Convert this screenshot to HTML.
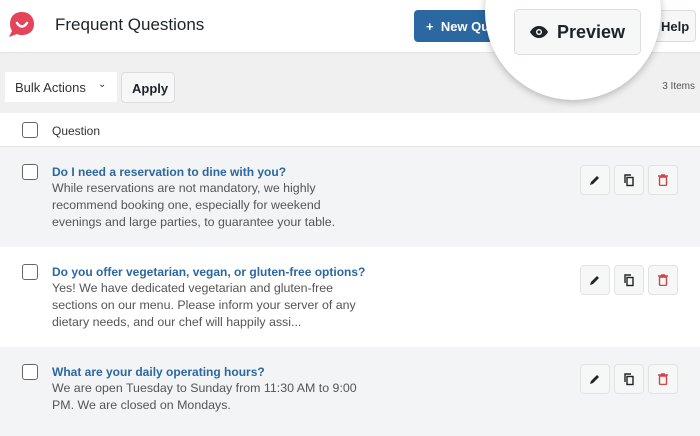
<!DOCTYPE html>
<html><head><style>
*{box-sizing:border-box;margin:0;padding:0}
body{width:700px;height:436px;overflow:hidden;background:#f0f0f1;font-family:"Liberation Sans",sans-serif;position:relative}
.hdr{position:absolute;left:0;top:0;width:700px;height:53px;background:#fff;border-bottom:1px solid #e2e2e2}
.title{position:absolute;left:55px;top:15px;font-size:17px;color:#1d2327}
.newq{position:absolute;left:414px;top:10px;width:90px;height:32px;background:#2b67a0;border-radius:4px;color:#fff;font-size:13px;padding:9px 0 0 12px;font-weight:bold}
.help{position:absolute;left:652px;top:10px;width:44px;height:32px;background:#f6f7f7;border:1px solid #ddd;border-radius:4px;font-size:13px;padding:8px 0 0 8px;color:#1d2327;font-weight:bold}
.mag{position:absolute;left:485px;top:-76px;width:176px;height:176px;border-radius:50%;background:#fff;box-shadow:0 2px 8px rgba(0,0,0,.25);overflow:hidden}
.pv{position:absolute;left:29px;top:85px;width:127px;height:46px;background:#f6f7f7;border:1px solid #ddd;border-radius:5px;font-size:18px;font-weight:bold;color:#1d2327;padding:12px 0 0 42px}
.bulk{position:absolute;left:5px;top:72px;width:112px;height:30px;background:#fff;font-size:13px;color:#333;padding:8px 0 0 10px}
.apply{position:absolute;left:121px;top:72px;width:54px;height:31px;background:#f6f7f7;border:1px solid #ddd;border-radius:4px;font-size:13px;font-weight:bold;padding:8px 0 0 10px;color:#1d2327}
.items{position:absolute;right:5px;top:81px;font-size:10px;color:#555}
.th{position:absolute;left:0;top:113px;width:700px;height:34px;background:#fff;border-bottom:1px solid #e5e5e5}
.cb{position:absolute;left:22px;width:16px;height:16px;border:1.5px solid #666;border-radius:3px;background:#fff}
.row{position:absolute;left:0;width:700px}
.q{position:absolute;left:52px;font-size:12px;font-weight:bold;color:#2b67a0}
.a{position:absolute;left:52px;width:310px;font-size:12.4px;line-height:17px;color:#555}
.b{position:absolute;width:30px;height:30px;background:#f6f7f7;border:1px solid #e2e2e2;border-radius:4px;display:flex;align-items:center;justify-content:center}
</style></head><body>
<div class="hdr">
<svg style="position:absolute;left:6px;top:11px" width="32" height="28" viewBox="0 0 32 28"><path d="M16 1C8 1 4 6 4 13c0 3 1 5 2 7L3 26l8-3c2 1 3 1 5 1 8 0 12-5 12-11S24 1 16 1z" fill="#e5435a"/><path d="M11 12q5 7 10 0" stroke="#fff" stroke-width="2.5" fill="none" stroke-linecap="round"/></svg>
<div class="title">Frequent Questions</div>
<div class="newq">+&nbsp; New Qu</div>
<div class="help">Help</div>
</div>
<div class="mag"><div class="pv"><svg style="position:absolute;left:14px;top:15px" width="20" height="14" viewBox="0 0 20 14"><path d="M10 1C5 1 2 5 1 7c1 2 4 6 9 6s8-4 9-6c-1-2-4-6-9-6z" fill="#1d2327"/><circle cx="10" cy="7" r="3" fill="#fff"/><circle cx="10" cy="7" r="1.6" fill="#1d2327"/></svg>Preview</div></div>
<div class="bulk">Bulk Actions <span style="position:absolute;left:93px;top:7px;font-size:10px">⌄</span></div>
<div class="apply">Apply</div>
<div class="items">3 Items</div>
<div class="th"><div class="cb" style="top:9px"></div><div style="position:absolute;left:52px;top:11px;font-size:12px;color:#333">Question</div></div>

<div class="row" style="top:147px;height:100px;background:#f3f4f6">
<div class="cb" style="top:17px"></div>
<div class="q" style="top:18px">Do I need a reservation to dine with you?</div>
<div class="a" style="top:33px">While reservations are not mandatory, we highly recommend booking one, especially for weekend evenings and large parties, to guarantee your table.</div>
</div>
<div class="row" style="top:247px;height:100px;background:#fff">
<div class="cb" style="top:17px"></div>
<div class="q" style="top:18px">Do you offer vegetarian, vegan, or gluten-free options?</div>
<div class="a" style="top:33px">Yes! We have dedicated vegetarian and gluten-free sections on our menu. Please inform your server of any dietary needs, and our chef will happily assi...</div>
</div>
<div class="row" style="top:347px;height:89px;background:#f3f4f6">
<div class="cb" style="top:17px"></div>
<div class="q" style="top:18px">What are your daily operating hours?</div>
<div class="a" style="top:33px">We are open Tuesday to Sunday from 11:30 AM to 9:00 PM. We are closed on Mondays.</div>
</div>

<div id="btns"></div>
<script>
[165,265,364].forEach(function(t){
var h='';
h+='<div class="b" style="left:580px;top:'+t+'px"><svg width="12" height="12" viewBox="0 0 12 12"><path d="M1 11l1-3 6-6 2 2-6 6z" fill="#1d2327"/></svg></div>';
h+='<div class="b" style="left:614px;top:'+t+'px"><svg width="12" height="13" viewBox="0 0 12 13"><path d="M2 9V1h6" stroke="#1d2327" stroke-width="1.4" fill="none"/><rect x="4" y="3.5" width="6" height="8" stroke="#1d2327" stroke-width="1.4" fill="none"/></svg></div>';
h+='<div class="b" style="left:648px;top:'+t+'px"><svg width="10" height="12" viewBox="0 0 10 12"><path d="M0 2h10M3 1h4" stroke="#d04545" stroke-width="1.4"/><rect x="1.5" y="3" width="7" height="8.5" rx="1" fill="none" stroke="#d04545" stroke-width="1.4"/></svg></div>';
document.getElementById('btns').insertAdjacentHTML('beforeend',h);
});
</script>
</body></html>
